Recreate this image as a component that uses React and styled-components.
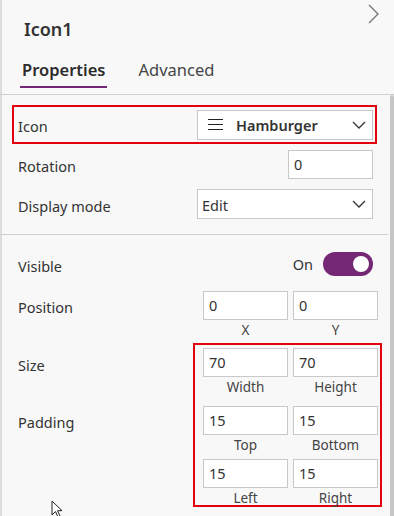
import styled, { createGlobalStyle } from "styled-components";

const GlobalStyle = createGlobalStyle`
  html, body {
    margin: 0;
    padding: 0;
    background: #f8f8f8;
  }
  body {
    font-family: "Segoe UI", "Noto Sans", "Open Sans", sans-serif;
    color: #333;
  }
`;

const Panel = styled.div`
  position: relative;
  width: 394px;
  height: 516px;
  overflow: hidden;
  background: #f8f8f8;
  box-shadow: inset 2px 0 0 #dcdcdc;
`;

const Header = styled.div`
  display: flex;
  justify-content: space-between;
  align-items: flex-start;
  height: 52px;
  padding: 0 14px 0 24px;
`;

const Title = styled.h1`
  margin: 17px 0 0;
  font-size: 18px;
  font-weight: 600;
  line-height: 24px;
  color: #333;
`;

const CloseButton = styled.button`
  margin-top: 4px;
  padding: 0;
  border: 0;
  background: transparent;
  display: flex;
`;

const Tabs = styled.div`
  display: flex;
  gap: 29px;
  padding-left: 20px;
  height: 42px;
  border-bottom: 1px solid #d0d0d0;
`;

const Tab = styled.div`
  font-size: 16.5px;
  line-height: 24px;
  padding: 6px 2px 4px;
  height: 24px;
  color: ${p => (p.active ? "#2b2b2b" : "#444")};
  font-weight: ${p => (p.active ? 600 : 400)};
  border-bottom: 2px solid ${p => (p.active ? "#742774" : "transparent")};
`;

const Section = styled.div`
  padding: ${p => p.pad || "0"};
`;

const Divider = styled.hr`
  margin: 0 6px 0 0;
  border: 0;
  border-top: 1px solid #d0d0d0;
`;

const Highlight = styled.div`
  border: 2px solid #e3000f;
  box-sizing: border-box;
`;

const IconHighlight = styled(Highlight)`
  margin: 0 17px 0 12px;
  height: 39px;
  padding: 0 2px 0 4px;
  display: flex;
  align-items: center;
  justify-content: space-between;
`;

const Row = styled.div`
  display: flex;
  align-items: center;
  justify-content: space-between;
  height: 40px;
  padding: 0 21px 0 18px;
`;

const Label = styled.span`
  font-size: 14.5px;
  line-height: 20px;
  color: #333;
  padding-top: 3px;
`;

const Select = styled.div`
  width: 176px;
  height: 30px;
  box-sizing: border-box;
  border: 1px solid #c8c8c8;
  background: #fff;
  display: flex;
  align-items: center;
  padding: 0 6px 0 4px;
  gap: 12px;
  font-size: 14.5px;
  color: #333;
`;

const SelectIcon = styled.span`
  display: flex;
  padding-left: 6px;
`;

const SelectText = styled.span`
  flex: 1;
  font-weight: ${p => (p.bold ? 600 : 400)};
  padding-top: 1px;
`;

const TextInput = styled.div`
  width: 85px;
  height: 29px;
  box-sizing: border-box;
  border: 1px solid #c8c8c8;
  background: #fff;
  font-size: 14.5px;
  line-height: 27px;
  padding-left: 5px;
  color: #333;
`;

const Toggle = styled.div`
  display: flex;
  align-items: center;
  gap: 10px;
  font-size: 14.5px;
  color: #333;
`;

const Switch = styled.div`
  width: 50px;
  height: 24px;
  border-radius: 12px;
  background: #742774;
  display: flex;
  align-items: center;
  justify-content: flex-end;
  padding-right: 4px;
  box-sizing: border-box;
`;

const Knob = styled.div`
  width: 16px;
  height: 16px;
  border-radius: 50%;
  background: #fff;
`;

const FieldGrid = styled.div`
  display: grid;
  grid-template-columns: 85px 85px;
  column-gap: 5px;
  row-gap: 4px;
`;

const Field = styled.div`
  display: flex;
  flex-direction: column;
  align-items: center;
`;

const Caption = styled.span`
  font-size: 13.5px;
  line-height: 20px;
  color: #444;
`;

const PositionRow = styled.div`
  display: grid;
  grid-template-columns: 1fr auto;
  padding: 0 16px 0 18px;
  margin-top: 7px;
`;

const PositionLabel = styled(Label)`
  padding-top: 6px;
`;

const SizeArea = styled.div`
  display: grid;
  grid-template-columns: 1fr auto;
  grid-template-rows: 57px 1fr;
  padding: 0 12px 0 18px;
  margin-top: 3px;
`;

const SideLabel = styled(Label)`
  grid-column: 1;
  padding-top: 12px;
`;

const SizeBox = styled(Highlight)`
  grid-column: 2;
  grid-row: 1 / span 2;
  height: 164px;
  padding: 3px 2px 0 8px;
  display: flex;
  flex-direction: column;
  gap: 9px;
`;

const Scrollbar = styled.div`
  position: absolute;
  right: 0;
  top: 95px;
  width: 4px;
  bottom: 0;
  background: #c6c6c6;
  border-radius: 2px 2px 0 0;
`;

const Cursor = styled.svg`
  position: absolute;
  left: 51px;
  top: 500px;
`;

const Chevron = () => (
  <svg width="14" height="8" viewBox="0 0 14 8" fill="none">
    <path d="M1 1l6 6 6-6" stroke="#333" strokeWidth="1.3" />
  </svg>
);

const HamburgerIcon = () => (
  <svg width="16" height="11" viewBox="0 0 16 11">
    <path d="M0 0.5h15M0 5.5h15M0 10.5h15" stroke="#222" strokeWidth="1.2" />
  </svg>
);

function Pair({ items }) {
  return (
    <FieldGrid>
      {items.map(([value, caption]) => (
        <Field key={caption}>
          <TextInput>{value}</TextInput>
          <Caption>{caption}</Caption>
        </Field>
      ))}
    </FieldGrid>
  );
}

export default function App() {
  return (
    <>
      <GlobalStyle />
      <Panel>
        <Header>
          <Title>Icon1</Title>
          <CloseButton>
            <svg width="12" height="20" viewBox="0 0 12 20" fill="none">
              <path d="M1 1l9 9-9 9" stroke="#777" strokeWidth="1.4" />
            </svg>
          </CloseButton>
        </Header>
        <Tabs>
          <Tab active>Properties</Tab>
          <Tab>Advanced</Tab>
        </Tabs>

        <Section pad="10px 0 10px">
          <IconHighlight>
            <Label>Icon</Label>
            <Select>
              <SelectIcon>
                <HamburgerIcon />
              </SelectIcon>
              <SelectText bold>Hamburger</SelectText>
              <Chevron />
            </Select>
          </IconHighlight>
          <Row>
            <Label>Rotation</Label>
            <TextInput>0</TextInput>
          </Row>
          <Row>
            <Label>Display mode</Label>
            <Select>
              <SelectText>Edit</SelectText>
              <Chevron />
            </Select>
          </Row>
        </Section>
        <Divider />

        <Section pad="9px 0 0">
          <Row>
            <Label>Visible</Label>
            <Toggle>
              <span>On</span>
              <Switch>
                <Knob />
              </Switch>
            </Toggle>
          </Row>
          <PositionRow>
            <PositionLabel>Position</PositionLabel>
            <Pair items={[["0", "X"], ["0", "Y"]]} />
          </PositionRow>
          <SizeArea>
            <SideLabel>Size</SideLabel>
            <SideLabel>Padding</SideLabel>
            <SizeBox>
              <Pair items={[["70", "Width"], ["70", "Height"]]} />
              <Pair items={[["15", "Top"], ["15", "Bottom"], ["15", "Left"], ["15", "Right"]]} />
            </SizeBox>
          </SizeArea>
        </Section>

        <Scrollbar />
        <Cursor width="12" height="18" viewBox="0 0 12 18">
          <path d="M1 1v14l3.5-3.5 2.5 5.5 2-1-2.5-5.3H11z" fill="#fff" stroke="#222" strokeWidth="1" />
        </Cursor>
      </Panel>
    </>
  );
}
